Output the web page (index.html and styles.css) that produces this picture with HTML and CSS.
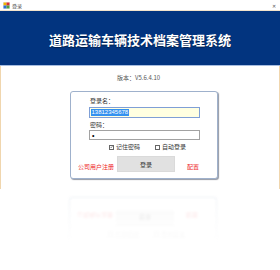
FILE: index.html
```html
<!DOCTYPE html>
<html lang="zh">
<head>
<meta charset="utf-8">
<title>登录</title>
<link rel="stylesheet" href="styles.css">
</head>
<body>
<div class="window">
  <div class="titlebar">
    <svg class="appicon" width="7" height="7" viewBox="0 0 7 7">
      <rect x="0" y="0" width="7" height="7" fill="#e8e8f0"/>
      <rect x="0.5" y="0.5" width="3" height="3" fill="#f0b400"/>
      <rect x="3.5" y="0.5" width="3" height="3" fill="#d83030"/>
      <rect x="0.5" y="3.5" width="3" height="3" fill="#3070d0"/>
      <rect x="3.5" y="3.5" width="3" height="3" fill="#50a040"/>
    </svg>
    <span class="wintitle">登录</span>
    <span class="close">✕</span>
  </div>
  <div class="banner"><h1>道路运输车辆技术档案管理系统</h1></div>
  <div class="content">
    <div class="version">版本：V5.6.4.10</div>
    <div class="panel">
      <div class="form">
        <div class="label">登录名：</div>
        <div class="input input-focus"><span class="sel">13812345678</span></div>
        <div class="label label2">密码：</div>
        <div class="input input-pass"><span class="dot">•</span></div>
      </div>
      <div class="checks">
        <span class="check"><span class="box box-on"><svg width="4" height="4" viewBox="0 0 4 4"><path d="M0.6 2 L1.6 3 L3.4 0.8" fill="none" stroke="#333" stroke-width="0.7"/></svg></span>记住密码</span>
        <span class="check"><span class="box"></span>自动登录</span>
      </div>
      <div class="actions">
        <a class="link link-left">公司用户注册</a>
        <button class="btn">登录</button>
        <a class="link link-right">配置</a>
      </div>
    </div>
  </div>
  <div class="reflection" aria-hidden="true">
    <div class="panel panel-flip">
      <div class="checks">
        <span class="check"><span class="box box-on"></span>记住密码</span>
        <span class="check"><span class="box"></span>自动登录</span>
      </div>
      <div class="actions">
        <a class="link link-left">公司用户注册</a>
        <button class="btn">登录</button>
        <a class="link link-right">配置</a>
      </div>
    </div>
  </div>
</div>
</body>
</html>
```

FILE: styles.css
```css
* { box-sizing: border-box; margin: 0; padding: 0; }
html, body { width: 280px; height: 270px; overflow: hidden; background: #ffffff; }
body { font-family: "Noto Sans CJK SC", "Liberation Sans", sans-serif; color: #333; }

.window { width: 280px; }

.titlebar {
  height: 11px;
  display: flex;
  align-items: center;
  padding: 0 3px;
  background: #ffffff;
  border-bottom: 1px solid #f2e3cc;
}
.appicon { display: block; margin-right: 2px; }
.wintitle { font-size: 5px; line-height: 7px; color: #444; }
.close { margin-left: auto; font-size: 5px; line-height: 7px; color: #555; margin-right: 1px; }

.banner {
  height: 55px;
  background: #02347f;
  border-bottom: 1px solid #a7bde0;
  display: flex;
  align-items: center;
  justify-content: center;
}
.banner h1 {
  font-size: 13px;
  font-weight: bold;
  color: #ffffff;
  line-height: 16px;
  letter-spacing: 0;
  text-shadow: 0 1px 1px rgba(0, 0, 0, 0.45);
  margin-top: 3px;
}

.content {
  height: 123px;
  border-left: 1px solid #f0d6ae;
  border-right: 1px solid #f0d6ae;
  padding-top: 8px;
  background: #ffffff;
}
.version {
  text-align: center;
  font-size: 6px;
  line-height: 8px;
  color: #555;
  margin-left: -3px;
}

.panel {
  width: 148px;
  height: 88px;
  margin: 9px 0 0 69px;
  border: 1px solid #9fb1cc;
  border-radius: 3px;
  background: #ffffff;
  box-shadow: 1px 1px 1px rgba(60, 70, 90, 0.55);
  padding: 5px 0 0 0;
}
.form { padding-left: 19px; }
.label { font-size: 6px; line-height: 8px; color: #333; }
.label2 { margin-top: 3px; }
.input {
  width: 111px;
  height: 10px;
  margin-top: 2px;
  margin-left: -1px;
  border: 1px solid #a2a2a2;
  background: #ffffff;
  display: flex;
  align-items: center;
  padding-left: 1px;
}
.input-focus { height: 11px; background: #ffffe1; border-color: #7f9fd6; }
.input-pass { margin-top: 1px; }
.sel {
  font-family: "Liberation Sans", sans-serif;
  font-size: 6px;
  line-height: 7px;
  background: #3391f0;
  color: #ffffff;
  padding: 0 0.5px;
}
.dot { font-family: "Liberation Sans", sans-serif; font-size: 7px; line-height: 7px; color: #000; padding-left: 1px; }

.checks {
  display: flex;
  padding-left: 38px;
  margin-top: 3px;
  gap: 15px;
}
.check { display: flex; align-items: center; font-size: 6px; line-height: 8px; color: #333; }
.box {
  width: 5px;
  height: 5px;
  border: 0.8px solid #666;
  margin-right: 2px;
  display: flex;
  align-items: center;
  justify-content: center;
  background: #fff;
}
.box svg { display: block; }

.actions {
  display: flex;
  align-items: flex-end;
  margin-top: 5px;
  padding-left: 7px;
}
.link {
  font-size: 6px;
  line-height: 8px;
  color: #ee1c24;
  padding-bottom: 1px;
}
.link-left { width: 39px; white-space: nowrap; }
.btn {
  width: 58px;
  height: 16px;
  background: #e1e1e1;
  border: 1px solid #dadada;
  font-family: "Noto Sans CJK SC", sans-serif;
  font-size: 6px;
  color: #333;
}
.link-right { margin-left: 12px; }

.reflection {
  height: 62px;
  overflow: hidden;
  padding-top: 8px;
  -webkit-mask-image: linear-gradient(to bottom, rgba(0,0,0,1), rgba(0,0,0,0) 90%);
  mask-image: linear-gradient(to bottom, rgba(0,0,0,1), rgba(0,0,0,0) 90%);
}
.panel-flip {
  height: 46px;
  margin-top: 0;
  padding-top: 0;
  transform: scaleY(-1);
  opacity: 0.2;
  filter: blur(1px);
  box-shadow: none;
  border-top-color: transparent;
}
```
